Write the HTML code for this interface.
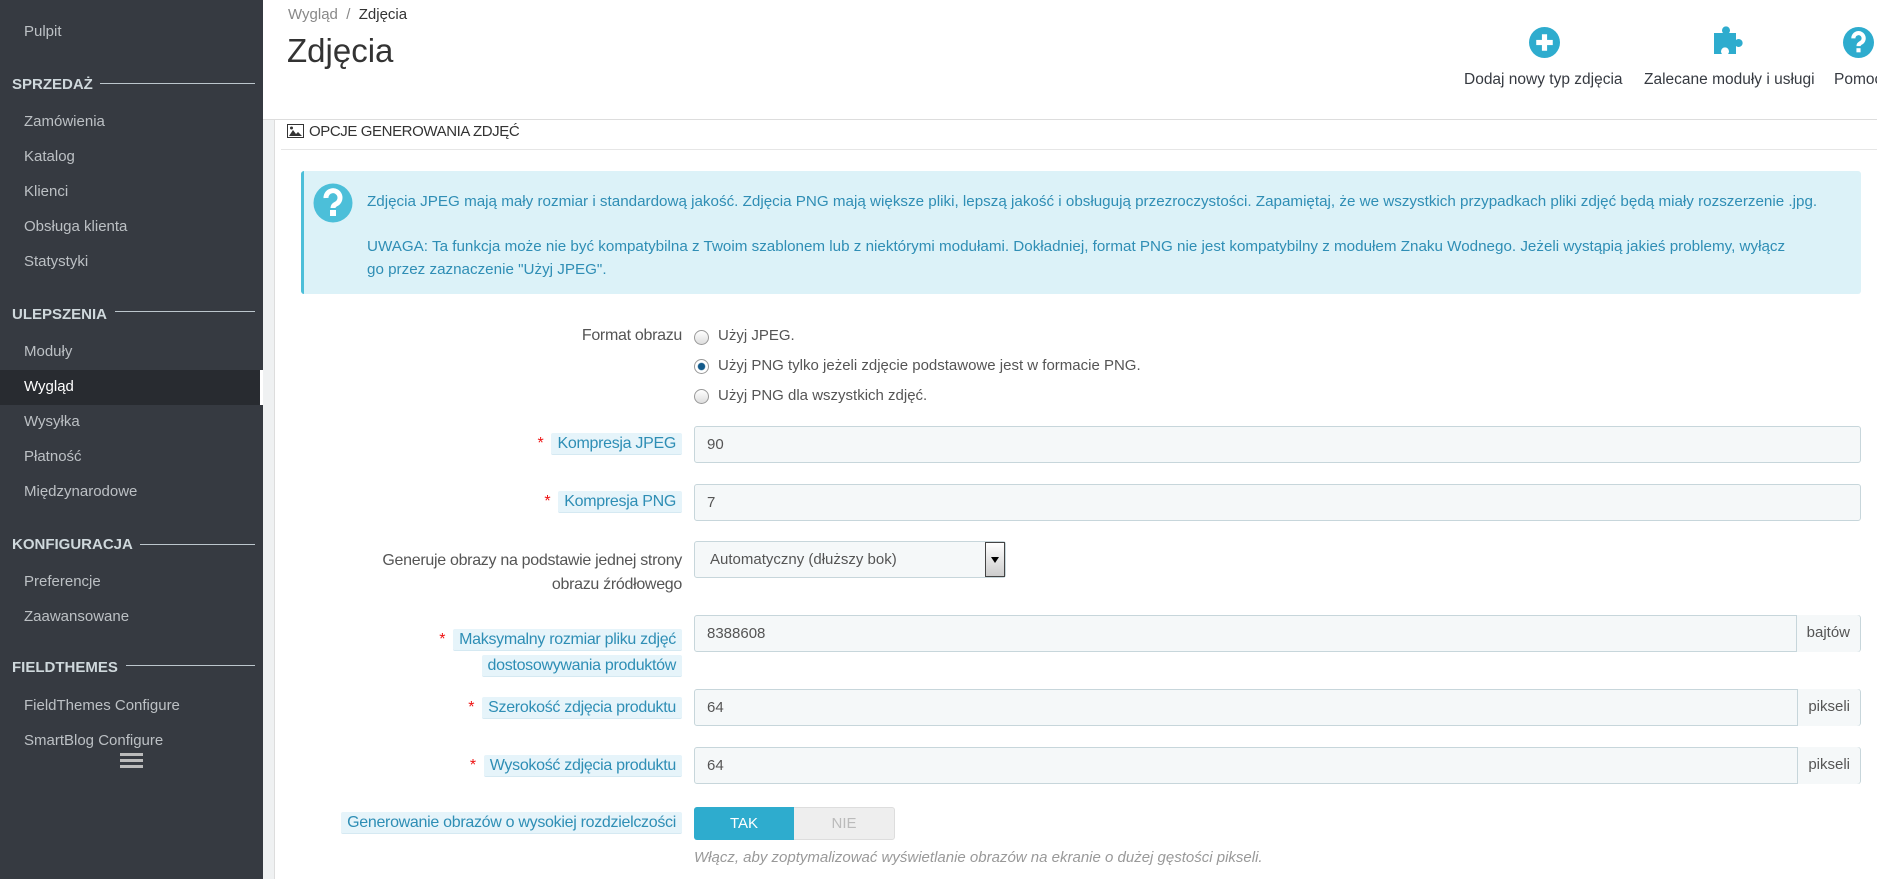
<!DOCTYPE html>
<html><head><meta charset="utf-8"><style>
*{box-sizing:border-box;margin:0;padding:0}
body{width:1877px;height:879px;overflow:hidden;position:relative;font-family:"Liberation Sans",sans-serif;background:#fff;color:#555}
.abs{position:absolute;white-space:nowrap}
#sb{position:absolute;left:0;top:0;width:263px;height:879px;background:#363a41}
.si{position:absolute;left:24px;font-size:15px;color:#bcc0c4}
.sh{position:absolute;left:12px;font-size:15px;font-weight:bold;color:#cfd8dc}
.sl{position:absolute;height:1px;background:#bcc6cc;right:8px}
.lbl{position:absolute;right:1195px;font-size:16px;color:#555;text-align:right;letter-spacing:-0.3px}
.pill{background:#e6f4fa;color:#2e8eb5;padding:2px 6px;border-radius:2px;box-shadow:0 1px 0 #d5e9f2}
.star{color:#e11;margin-right:8px}
.inp{position:absolute;left:694px;right:16px;height:37px;background:#f5f8f9;border:1px solid #c7d6db;border-radius:3px;font-size:15px;color:#555;padding:9px 12px}
.add{position:absolute;right:0;top:-1px;bottom:-1px;border-left:1px solid #c7d6db;padding:9px 10px;background:#f5f8f9;border-radius:0 3px 3px 0}
.radio{position:absolute;left:694px;width:15px;height:15px;border-radius:50%;border:1px solid #999;background:linear-gradient(#fff,#ddd)}
.rt{position:absolute;left:718px;font-size:15px;color:#555}
</style></head><body>
<div id="sb">
<div class="si" style="top:23px">Pulpit</div>
<div class="sh" style="top:76px">SPRZEDAŻ</div><div class="sl" style="top:83px;left:100px"></div>
<div class="si" style="top:113px">Zamówienia</div>
<div class="si" style="top:148px">Katalog</div>
<div class="si" style="top:183px">Klienci</div>
<div class="si" style="top:218px">Obsługa klienta</div>
<div class="si" style="top:253px">Statystyki</div>
<div class="sh" style="top:306px">ULEPSZENIA</div><div class="sl" style="top:311px;left:115px"></div>
<div class="si" style="top:343px">Moduły</div>
<div style="position:absolute;left:0;top:370px;width:263px;height:35px;background:#282b30;border-right:3px solid #fff"></div>
<div class="si" style="top:378px;color:#fff">Wygląd</div>
<div class="si" style="top:413px">Wysyłka</div>
<div class="si" style="top:448px">Płatność</div>
<div class="si" style="top:483px">Międzynarodowe</div>
<div class="sh" style="top:536px">KONFIGURACJA</div><div class="sl" style="top:544px;left:140px"></div>
<div class="si" style="top:573px">Preferencje</div>
<div class="si" style="top:608px">Zaawansowane</div>
<div class="sh" style="top:659px">FIELDTHEMES</div><div class="sl" style="top:665px;left:126px"></div>
<div class="si" style="top:697px">FieldThemes Configure</div>
<div class="si" style="top:732px">SmartBlog Configure</div>
<div style="position:absolute;left:120px;top:753px;width:23px;height:3px;background:#bbb;box-shadow:0 6px 0 #bbb,0 12px 0 #bbb"></div>
</div>
<!-- header -->
<div class="abs" style="left:288px;top:6px;font-size:15px;color:#888">Wygląd&nbsp;&nbsp;<span style="color:#888">/</span>&nbsp;&nbsp;<span style="color:#333">Zdjęcia</span></div>
<div class="abs" style="left:287px;top:32px;font-size:33px;color:#333">Zdjęcia</div>
<svg class="abs" style="left:1529px;top:27px" width="31" height="31" viewBox="0 0 30 30"><circle cx="15" cy="15" r="15" fill="#2eacce"/><rect x="12.5" y="7" width="5" height="16" fill="#fff"/><rect x="7" y="12.5" width="16" height="5" fill="#fff"/></svg>
<svg class="abs" style="left:1713px;top:25px" width="34" height="32" viewBox="0 0 34 32"><path d="M1 8h9a4 4 0 1 1 6 0h7v7a4 4 0 1 1 0 6v8h-8a4 4 0 1 0-6 0H1z" fill="#2eacce"/></svg>
<svg class="abs" style="left:1843px;top:27px" width="31" height="31" viewBox="0 0 30 30"><circle cx="15" cy="15" r="15" fill="#2eacce"/><path d="M10 11a5 5 0 1 1 7 4.5c-1.5.8-2 1.5-2 3" stroke="#fff" stroke-width="4" fill="none"/><rect x="13" y="20.5" width="4" height="4" fill="#fff"/></svg>
<div class="abs" style="left:1464px;top:71px;font-size:15.5px;color:#363a41">Dodaj nowy typ zdjęcia</div>
<div class="abs" style="left:1644px;top:71px;font-size:15.5px;color:#363a41">Zalecane moduły i usługi</div>
<div class="abs" style="left:1834px;top:71px;font-size:15.5px;color:#363a41">Pomoc</div>
<div style="position:absolute;left:263px;top:119px;right:0;height:1px;background:#ddd"></div>
<div style="position:absolute;left:263px;top:120px;width:12px;bottom:0;background:#eff1f2;border-right:1px solid #ddd"></div>
<!-- panel heading -->
<svg class="abs" style="left:287px;top:124px" width="17" height="14" viewBox="0 0 17 14"><rect x="0.5" y="0.5" width="16" height="13" fill="#fff" stroke="#333"/><path d="M2 12l4-6 3 4 2-2 4 4z" fill="#333"/><circle cx="4.5" cy="4" r="1.5" fill="#333"/></svg>
<div class="abs" style="left:309px;top:123px;font-size:15px;color:#333;letter-spacing:-0.4px">OPCJE GENEROWANIA ZDJĘĆ</div>
<div style="position:absolute;left:281px;right:0;top:149px;height:1px;background:#e6e6e6"></div>
<!-- alert -->
<div style="position:absolute;left:301px;top:171px;width:1560px;height:123px;background:#dcf2f8;border-left:3px solid #4cbfd9;border-radius:3px"></div>
<svg class="abs" style="left:313px;top:183px" width="40" height="40" viewBox="0 0 40 40"><circle cx="20" cy="20" r="19.5" fill="#4cbfd9"/><path d="M13 15a7 7 0 1 1 10 6c-2 1-3 2-3 4" stroke="#fff" stroke-width="5" fill="none"/><rect x="17" y="27" width="6" height="6" fill="#fff"/></svg>
<div class="abs" style="left:367px;top:193px;font-size:15.2px;color:#2f8eb5">Zdjęcia JPEG mają mały rozmiar i standardową jakość. Zdjęcia PNG mają większe pliki, lepszą jakość i obsługują przezroczystości. Zapamiętaj, że we wszystkich przypadkach pliki zdjęć będą miały rozszerzenie .jpg.</div>
<div class="abs" style="left:367px;top:235px;font-size:15.2px;color:#2f8eb5;line-height:23px">UWAGA: Ta funkcja może nie być kompatybilna z Twoim szablonem lub z niektórymi modułami. Dokładniej, format PNG nie jest kompatybilny z modułem Znaku Wodnego. Jeżeli wystąpią jakieś problemy, wyłącz<br>go przez zaznaczenie "Użyj JPEG".</div>
<!-- form -->
<div class="lbl" style="top:327px">Format obrazu</div>
<div class="radio" style="top:330px"></div><div class="rt" style="top:327px">Użyj JPEG.</div>
<div class="radio" style="top:359px;background:radial-gradient(#135a8a 35%,#fff 45%)"></div><div class="rt" style="top:357px">Użyj PNG tylko jeżeli zdjęcie podstawowe jest w formacie PNG.</div>
<div class="radio" style="top:389px"></div><div class="rt" style="top:387px">Użyj PNG dla wszystkich zdjęć.</div>

<div class="lbl" style="top:435px"><span class="star">*</span><span class="pill">Kompresja JPEG</span></div>
<div class="inp" style="top:426px">90</div>
<div class="lbl" style="top:493px"><span class="star">*</span><span class="pill">Kompresja PNG</span></div>
<div class="inp" style="top:484px">7</div>

<div class="lbl" style="top:549px;line-height:24px">Generuje obrazy na podstawie jednej strony<br>obrazu źródłowego</div>
<div class="inp" style="top:541px;right:auto;width:312px;padding-left:15px">Automatyczny (dłuższy bok)<div style="position:absolute;right:0;top:0;width:20px;height:35px;background:linear-gradient(#fff,#ccc);border:1px solid #444"><div style="position:absolute;left:5px;top:14px;border:4px solid transparent;border-top:6px solid #000"></div></div></div>

<div class="lbl" style="top:627px;line-height:26px"><span class="star">*</span><span class="pill">Maksymalny rozmiar pliku zdjęć</span><br><span class="pill">dostosowywania produktów</span></div>
<div class="inp" style="top:615px">8388608<div class="add">bajtów</div></div>
<div class="lbl" style="top:699px"><span class="star">*</span><span class="pill">Szerokość zdjęcia produktu</span></div>
<div class="inp" style="top:689px">64<div class="add">pikseli</div></div>
<div class="lbl" style="top:757px"><span class="star">*</span><span class="pill">Wysokość zdjęcia produktu</span></div>
<div class="inp" style="top:747px">64<div class="add">pikseli</div></div>

<div class="lbl" style="top:814px"><span class="pill">Generowanie obrazów o wysokiej rozdzielczości</span></div>
<div style="position:absolute;left:694px;top:807px;width:201px;height:33px;background:#eee;border:1px solid #ddd;border-radius:3px"></div>
<div style="position:absolute;left:694px;top:807px;width:100px;height:33px;background:#2eacce;border-radius:3px 0 0 3px;color:#fff;font-size:15px;text-align:center;line-height:33px">TAK</div>
<div style="position:absolute;left:794px;top:807px;width:100px;height:33px;color:#bbb;font-size:15px;text-align:center;line-height:33px">NIE</div>
<div class="abs" style="left:694px;top:849px;font-size:15px;font-style:italic;color:#999">Włącz, aby zoptymalizować wyświetlanie obrazów na ekranie o dużej gęstości pikseli.</div>
</body></html>
